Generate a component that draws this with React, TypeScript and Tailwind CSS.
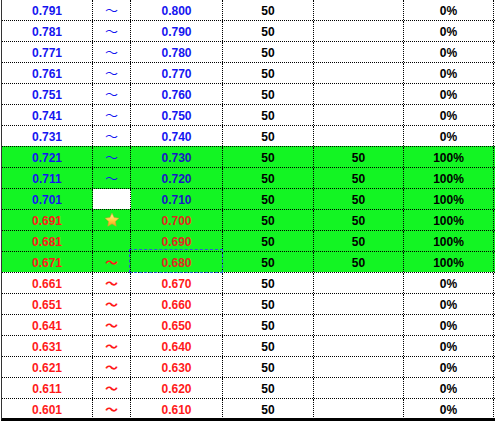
import React from 'react';

type Row = {
  low: string;
  high: string;
  red: boolean;
  green: boolean;
  mark: 'tilde' | 'blank' | 'white' | 'star';
};

const rows: Row[] = Array.from({ length: 20 }, (_, i) => {
  const low = (791 - i * 10) / 1000;
  const high = (800 - i * 10) / 1000;
  let mark: Row['mark'] = 'tilde';
  if (i === 9) mark = 'white';
  if (i === 10) mark = 'star';
  if (i === 11) mark = 'blank';
  return {
    low: low.toFixed(3),
    high: high.toFixed(3),
    red: i >= 10,
    green: i >= 7 && i <= 12,
    mark,
  };
});

const Star: React.FC = () => (
  <svg width="16" height="16" viewBox="0 0 24 24">
    <defs>
      <linearGradient id="st" x1="0" y1="0" x2="0" y2="1">
        <stop offset="0" stopColor="#fff3a0" />
        <stop offset="0.55" stopColor="#ffd23a" />
        <stop offset="1" stopColor="#f0a020" />
      </linearGradient>
    </defs>
    <path
      d="M12 1.8l3.1 6.6 7.1.9-5.2 4.9 1.3 7.1L12 17.8l-6.3 3.5 1.3-7.1-5.2-4.9 7.1-.9z"
      fill="url(#st)"
      stroke="#e09a28"
      strokeWidth="0.8"
      strokeLinejoin="round"
    />
  </svg>
);

const border = 'border-r border-dotted border-black';
const cell = `flex items-center justify-center pt-px ${border}`;

const App: React.FC = () => {
  return (
    <div
      className="relative w-[495px] h-[421px] overflow-hidden bg-white text-[12px] font-bold"
      style={{ fontFamily: '"Liberation Sans", Arial, sans-serif' }}
    >
      <div className="ml-px -mt-px w-[494px] border-l border-b-[3px] border-l-[#333] border-b-black">
        {rows.map((r, i) => {
          const last = i === rows.length - 1;
          const txt = r.red ? 'text-[#ff1a1a]' : 'text-[#1515f0]';
          const txt2 = r.green ? (r.red ? 'text-[#e02a1e]' : 'text-[#1818c4]') : txt;
          return (
            <div
              key={r.low}
              className={`grid grid-cols-[91px_38px_92px_91px_90px_90px] ${
                last ? 'h-[20px]' : 'h-[21px]'
              } border-t border-dotted border-black ${r.green ? 'bg-[#13f523]' : 'bg-white'}`}
            >
              <div className={`${cell} ${txt}`}>{r.low}</div>
              <div
                className={`flex items-center justify-center ${border} ${r.mark === 'white' ? 'bg-white' : ''}`}
              >
                {r.mark === 'tilde' && (
                  <span
                    className={`h-[20px] text-[13px] leading-[20px] ${
                      r.red ? 'font-bold text-[#ff1a1a]' : 'font-normal text-[#1515f0]'
                    }`}
                    style={{ fontFamily: '"Noto Sans CJK JP", sans-serif' }}
                  >
                    ～
                  </span>
                )}
                {r.mark === 'star' && <Star />}
              </div>
              <div className={`${cell} ${txt2}`}>{r.high}</div>
              <div className={`${cell} text-black`}>50</div>
              <div className={`${cell} text-black`}>{r.green ? '50' : ''}</div>
              <div className={`${cell} text-black`}>{r.green ? '100%' : '0%'}</div>
            </div>
          );
        })}
      </div>
      <div className="absolute left-[129px] top-[249px] w-[94px] h-[24px] border border-dashed border-[#2a5fd8]" />
    </div>
  );
};

export default App;
